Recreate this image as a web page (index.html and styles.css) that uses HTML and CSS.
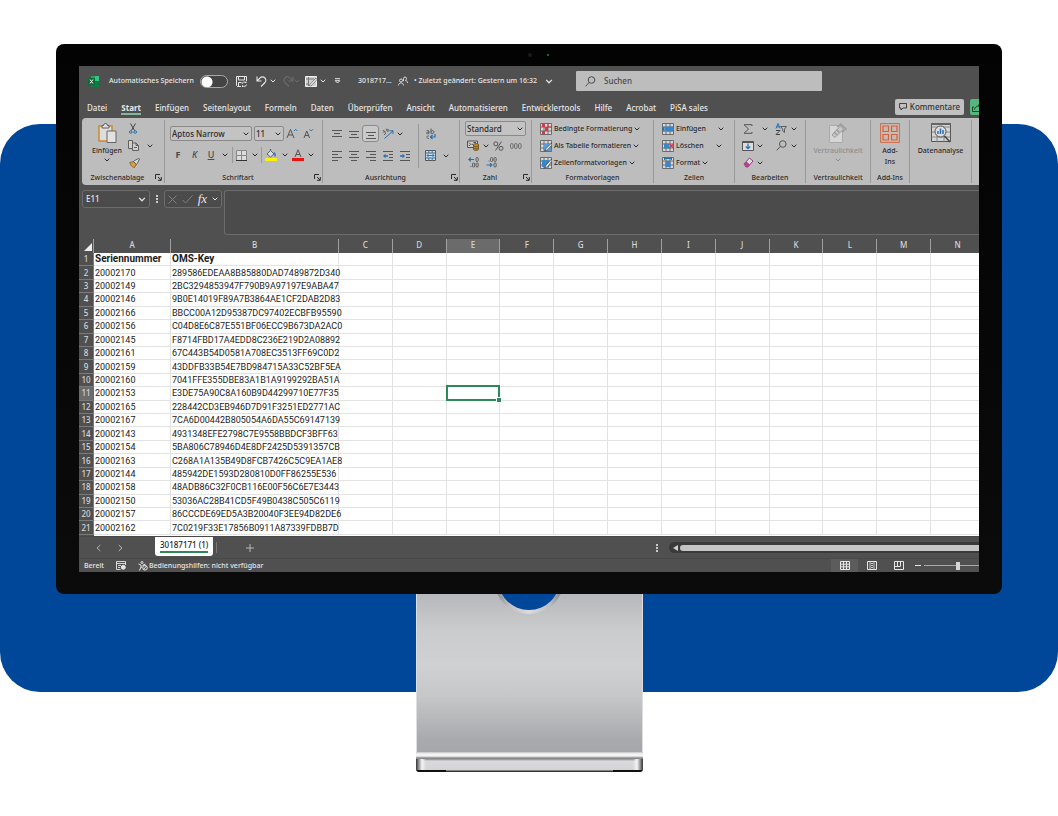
FILE: index.html
```html
<!DOCTYPE html>
<html lang="de">
<head>
<meta charset="utf-8">
<title>30187171 (1)</title>
<link rel="stylesheet" href="styles.css">
</head>
<body>
<svg class="sprite" aria-hidden="true">
  <symbol id="chev" viewBox="0 0 6 4"><path d="M.7.7 3 3 5.300.7" fill="none" stroke="currentColor" stroke-width="1"/></symbol>
  <symbol id="launch" viewBox="0 0 7 7"><path d="M.5 5V.5H5M3 3l3 3M6.300 3v3.300H3" fill="none" stroke="currentColor" stroke-width="1"/></symbol>
  <symbol id="sheetgrid" viewBox="0 0 12 12"><path d="M.5.5h11v11H.5zM.5 4h11M.5 8h11M4 .5v11M8 .5v11" fill="#d8d8d8" stroke="#555" stroke-width=".8"/></symbol>
</svg>
<main class="stage">
  <div class="monitor">
    <div class="camera"><i class="lens"></i><i class="led"></i></div>
    <div class="screen">
      <header class="titlebar">
        <svg width="11" height="11" viewBox="0 0 11 11"><path d="M3 0h8v11H3z" fill="#21a366"/><path d="M3 5h8v6H3z" fill="#107c41"/><path d="M7 0h4v5H7z" fill="#33c481"/><path d="M0 2h7v7H0z" fill="#0b6a38"/><path d="M2 3.500l3 4M5 3.500l-3 4" stroke="#fff"/></svg>
        <label for="autosave">Automatisches Speichern</label>
        <input id="autosave" class="toggle" type="checkbox">
        <button aria-label="Speichern"><svg width="11" height="11" viewBox="0 0 11 11" fill="none" stroke="currentColor"><path d="M5 10.500H1.500l-1-1V.5h10V5M2.500.5V4h6V.5M2.500 10V6.500h3M6 8a2.200 2.200 0 0 1 4-1V5.500M10.500 8.500a2.200 2.200 0 0 1-4 1V11"/></svg></button>
        <button aria-label="Rückgängig"><svg width="11" height="11" viewBox="0 0 11 11" fill="none" stroke="currentColor" stroke-width="1.100"><path d="M1 .5V5h4.500M1.200 4.800 4 2a3.200 3.200 0 0 1 5 4.500L5 10.500"/></svg></button>
        <svg class="chev"><use href="#chev"/></svg>
        <button class="off" aria-label="Wiederholen"><svg width="11" height="11" viewBox="0 0 11 11" fill="none" stroke="currentColor" stroke-width="1.100"><path d="M10 .5V5H5.500M9.800 4.800 7 2a3.200 3.200 0 0 0-5 4.500L6 10.500"/></svg></button>
        <svg class="chev off"><use href="#chev"/></svg>
        <button aria-label="Zeichnen"><svg width="12" height="11" viewBox="0 0 12 11"><path d="M.5.5h11v10H.5z" fill="#d0d0d0" stroke="#eee"/><path d="M1 3h8M3.500 1v9M1 8h3" stroke="#777"/><path d="M4 9.500 11 2l1 1.500-6 6.500z" fill="#f4f4f4" stroke="#555" stroke-width=".7"/></svg></button>
        <svg class="chev"><use href="#chev"/></svg>
        <button aria-label="Symbolleiste anpassen"><svg width="7" height="6" viewBox="0 0 7 6" fill="none" stroke="currentColor"><path d="M1 .7h5M1.200 2.700h4.600L3.500 5z"/></svg></button>
        <span>3018717...</span>
        <svg width="10" height="10" viewBox="0 0 10 10" fill="none" stroke="currentColor" stroke-width=".9"><circle cx="3" cy="4.500" r="1.500"/><path d="M.5 9.500c0-3.500 5-3.500 5 0M5.500 5.200V2.500a1.500 1.500 0 0 1 3 0c0 1-.5 1.500-1 2 1.500.3 2 1 2 2.500"/></svg>
        <span class="edited">• Zuletzt geändert: Gestern um 16:32</span>
        <svg class="chev big"><use href="#chev"/></svg>
        <label class="search"><svg width="11" height="11" viewBox="0 0 11 11" fill="none" stroke="currentColor"><circle cx="6.500" cy="4" r="3.300"/><path d="M4 6.500.7 10.300"/></svg><input type="text" placeholder="Suchen" aria-label="Suchen"></label>
      </header>
      <nav class="tabs">
        <a href="#">Datei</a><a href="#" class="active">Start</a><a href="#">Einfügen</a><a href="#">Seitenlayout</a><a href="#">Formeln</a><a href="#">Daten</a><a href="#">Überprüfen</a><a href="#">Ansicht</a><a href="#">Automatisieren</a><a href="#">Entwicklertools</a><a href="#">Hilfe</a><a href="#">Acrobat</a><a href="#">PiSA sales</a>
        <button class="comments"><svg width="8" height="8" viewBox="0 0 8 8" fill="none" stroke="currentColor" stroke-width=".9"><path d="M.5.5h7v4.500H4L2 7V5H.5z"/></svg>Kommentare</button>
        <button class="share" aria-label="Freigeben"><svg width="10" height="9" viewBox="0 0 10 9" fill="none" stroke="currentColor" stroke-width=".9"><path d="M2 4H.5v4.500h9V5M2.500 6.500C3 4 4.500 3 7 3V1l3 3"/></svg></button>
      </nav>

      <section class="ribbon">
        <div class="group g-clip">
          <div class="body">
            <button class="large"><svg width="19" height="20" viewBox="0 0 19 20"><path d="M1 3h13v15H1z" fill="#ddd" stroke="#c98a2b" stroke-width="1.500"/><path d="M4 2.500h1.500a2 2 0 0 1 4 0H11V5H4z" fill="#ddd" stroke="#555" stroke-width=".9"/><path d="M9 8h9v11.500H9z" fill="#e2e2e2" stroke="#666"/></svg><span>Einfügen</span><svg class="chev"><use href="#chev"/></svg></button>
            <div class="rows">
              <div class="row"><button aria-label="Ausschneiden"><svg width="8" height="11" viewBox="0 0 8 11" fill="none"><path d="M1.500.5l4 7M6.500.5l-4 7" stroke="#444"/><circle cx="1.800" cy="9" r="1.300" stroke="#2470b5"/><circle cx="6.200" cy="9" r="1.300" stroke="#2470b5"/></svg></button></div>
              <div class="row"><button aria-label="Kopieren"><svg width="11" height="11" viewBox="0 0 11 11" fill="#cfcfcf" stroke="#555" stroke-width=".9"><path d="M4 8.500H.5v-8H4.500V3"/><path d="M4.500 3H8l2.500 2.500v5h-6zM8 3v2.500h2.500M6 7.500h3"/></svg></button><svg class="chev"><use href="#chev"/></svg></div>
              <div class="row"><button aria-label="Format übertragen"><svg width="11" height="10" viewBox="0 0 11 10"><path d="M.8 4.500 5 3.500l2.500 2.500L5.500 9.500C3 9 1.500 7.500.8 4.500z" fill="#d9a03f" stroke="#6b5020" stroke-width=".7"/><path d="M4.500 3.500l3 3 .8-1.200L10.500 1 9.700.4 5.700 2.600z" fill="#ddd" stroke="#444" stroke-width=".8"/></svg></button></div>
            </div>
          </div>
          <footer class="more">Zwischenablage<svg class="launch"><use href="#launch"/></svg></footer>
        </div>

        <div class="group g-font">
          <div class="body stack">
            <div class="fontrow">
              <span class="combo wide"><select aria-label="Schriftart"><option>Aptos Narrow</option></select><svg class="chev"><use href="#chev"/></svg></span>
              <span class="combo"><select aria-label="Schriftgrad"><option>11</option></select><svg class="chev"><use href="#chev"/></svg></span>
              <button aria-label="Schriftgrad vergrößern"><svg width="12" height="11" viewBox="0 0 12 11" fill="none"><path d="M1 10 4.500 1.500 8 10M2.300 7h4.400" stroke="#555"/><path d="M8 3l1.700-1.700L11.400 3" stroke="#2470b5"/></svg></button>
              <button aria-label="Schriftgrad verkleinern"><svg width="12" height="11" viewBox="0 0 12 11" fill="none"><path d="M2 10 4.800 3 7.600 10M3 7.500h3.600" stroke="#555"/><path d="M7.500 1.300 9.200 3l1.700-1.700" stroke="#2470b5"/></svg></button>
            </div>
            <div class="stylerow">
              <button class="fmt"><b>F</b></button><button class="fmt"><i>K</i></button><button class="fmt"><u>U</u></button><svg class="chev"><use href="#chev"/></svg><hr>
              <button aria-label="Rahmen"><svg width="11" height="11" viewBox="0 0 11 11"><path d="M.5.5h10v10H.5z" fill="#dcdcdc" stroke="#888"/><path d="M5.500 1v9M1 5.500h9" stroke="#888"/><path d="M0 10.500h11" stroke="#333"/></svg></button><svg class="chev"><use href="#chev"/></svg><hr>
              <button aria-label="Füllfarbe"><svg width="12" height="12" viewBox="0 0 12 12"><path d="M2 5 5.500 1.500 9 5 5.500 8z" fill="#ddd" stroke="#555" stroke-width=".9"/><path d="M5.500 1.500V0M9 3.500c1 .5 1.300 1.500 1 4" fill="none" stroke="#2470b5" stroke-width="1.300"/><path d="M0 9h12v3H0z" fill="#f7f200"/></svg></button><svg class="chev"><use href="#chev"/></svg>
              <button aria-label="Schriftfarbe"><svg width="12" height="12" viewBox="0 0 12 12"><path d="M3 8 6 .8 9 8M4 5.500h4" fill="none" stroke="#555"/><path d="M0 9h12v3H0z" fill="#ee1111"/></svg></button><svg class="chev"><use href="#chev"/></svg>
            </div>
          </div>
          <footer class="more">Schriftart<svg class="launch"><use href="#launch"/></svg></footer>
        </div>

        <div class="group g-align">
          <div class="body">
            <div class="aligns">
              <button aria-label="Oben"><svg width="10" height="10" viewBox="0 0 10 10" stroke="#555"><path d="M0 1.500h10M2 4.500h6M0 7.500h10"/></svg></button>
              <button aria-label="Mitte"><svg width="10" height="10" viewBox="0 0 10 10" stroke="#555"><path d="M0 2.500h10M2 5.500h6M0 8.500h10"/></svg></button>
              <button aria-label="Unten" class="pressed"><svg width="10" height="10" viewBox="0 0 10 10" stroke="#555"><path d="M0 3.500h10M2 6.500h6M0 9.500h10"/></svg></button>
              <button aria-label="Ausrichtung"><svg width="12" height="11" viewBox="0 0 12 11" fill="none"><path d="M1 2l2.500 3M4 .8l2 3M1 4.500c1-1.500 2-1.500 2.500-.5M4.500 2c1.500-1.500 3 0 1.500 1.500M2 7l2-2" stroke="#555" stroke-width=".9"/><path d="M2.500 10.500 11 3M7.500 2.800H11v3.200" stroke="#2470b5"/></svg></button>
              <svg class="chev"><use href="#chev"/></svg>
              <button aria-label="Linksbündig"><svg width="10" height="10" viewBox="0 0 10 10" stroke="#555"><path d="M0 .5h10M0 3.500h6M0 6.500h10M0 9.500h6"/></svg></button>
              <button aria-label="Zentriert"><svg width="10" height="10" viewBox="0 0 10 10" stroke="#555"><path d="M0 .5h10M2 3.500h6M0 6.500h10M2 9.500h6"/></svg></button>
              <button aria-label="Rechtsbündig"><svg width="10" height="10" viewBox="0 0 10 10" stroke="#555"><path d="M0 .5h10M4 3.500h6M0 6.500h10M4 9.500h6"/></svg></button>
              <button aria-label="Einzug verkleinern"><svg width="10" height="10" viewBox="0 0 10 10"><path d="M0 .5h10M6 3.500h4M6 6.500h4M0 9.500h10" stroke="#555"/><path d="M0 5l2.500-2.300v1.600H5v1.400H2.500v1.600z" fill="#2470b5"/></svg></button>
              <button aria-label="Einzug vergrößern"><svg width="10" height="10" viewBox="0 0 10 10"><path d="M0 .5h10M6 3.500h4M6 6.500h4M0 9.500h10" stroke="#555"/><path d="M5 5 2.500 2.700v1.600H0v1.400h2.500v1.600z" fill="#2470b5"/></svg></button>
            </div>
            <hr>
            <div class="wraps">
              <button aria-label="Textumbruch"><svg width="11" height="12" viewBox="0 0 11 12" fill="none"><path d="M4 5.500V3c-1-1-2.500-.5-2.500-.2M4 4c-3-.3-3 2-1.500 1.700L4 5M6 .5v5M6 3.500c1-1.500 3-1 3 .5s-2 2-3 1M4 8c-2-1-3.500 2.500 0 2.500" stroke="#555" stroke-width=".9"/><path d="M10 6v3H5.500M7.500 7l-2 2 2 2" stroke="#2470b5" stroke-width="1.200"/></svg></button><span></span>
              <button aria-label="Verbinden"><svg width="11" height="11" viewBox="0 0 11 11"><path d="M.5.5h10v10H.5z" fill="#dcdcdc" stroke="#555"/><path d="M3.800 0v11M7.200 0v11" stroke="#666"/><path d="M.5 3h10v5H.5z" fill="#c9dcea" stroke="#2470b5"/><path d="M2 5.500h7M3.500 4 2 5.500 3.500 7M7.500 4 9 5.500 7.500 7" fill="none" stroke="#2470b5" stroke-width=".9"/></svg></button><svg class="chev"><use href="#chev"/></svg>
            </div>
          </div>
          <footer class="more">Ausrichtung<svg class="launch"><use href="#launch"/></svg></footer>
        </div>

        <div class="group g-num">
          <div class="body rows">
            <div class="row"><span class="combo wide"><select aria-label="Zahlenformat"><option>Standard</option></select><svg class="chev"><use href="#chev"/></svg></span></div>
            <div class="row nums"><button aria-label="Währung"><svg width="12" height="11" viewBox="0 0 12 11"><path d="M.5 1h10v6.500H.5z" fill="#ccc" stroke="#555"/><path d="M2 2.500l1.500 1.800L2 6M9 2.500H6.500M4.500 4.300h2" fill="none" stroke="#555"/><path d="M6.500 4.500c0-1.200 5-1.200 5 0v5c0 1.200-5 1.200-5 0z" fill="#b88a3a" stroke="#6b4a14" stroke-width=".8"/><path d="M6.500 6c1 .8 4 .8 5 0M6.500 8c1 .8 4 .8 5 0" fill="none" stroke="#6b4a14" stroke-width=".7"/></svg></button><svg class="chev"><use href="#chev"/></svg><button aria-label="Prozent"><svg width="11" height="10" viewBox="0 0 11 10" fill="none" stroke="#555"><circle cx="2.800" cy="2.800" r="2"/><circle cx="8" cy="7.300" r="2"/><path d="M8.500.5 2.500 9.500"/></svg></button><button aria-label="Tausendertrennzeichen"><svg width="12" height="6" viewBox="0 0 12 6" fill="none" stroke="#666" stroke-width=".9"><rect x=".5" y=".5" width="2.600" height="5" rx="1.300"/><rect x="4.500" y=".5" width="2.600" height="5" rx="1.300"/><rect x="8.500" y=".5" width="2.600" height="5" rx="1.300"/></svg></button></div>
            <div class="row decs"><button aria-label="Dezimalstelle hinzufügen"><svg width="11" height="11" viewBox="0 0 11 11" fill="none" stroke="#555" stroke-width=".9"><path d="M6 2.500H.8M2.800.7.8 2.500l2 1.800" stroke="#2470b5" stroke-width="1.100"/><rect x="8" y=".5" width="2.200" height="4" rx="1"/><rect x="4.500" y="6" width="2.200" height="4" rx="1"/><rect x="8" y="6" width="2.200" height="4" rx="1"/><path d="M2.500 9.500h1"/></svg></button><button aria-label="Dezimalstelle entfernen"><svg width="11" height="11" viewBox="0 0 11 11" fill="none" stroke="#555" stroke-width=".9"><rect x="4.500" y=".5" width="2.200" height="4" rx="1"/><rect x="8" y=".5" width="2.200" height="4" rx="1"/><path d="M2.500 4h1"/><rect x="8" y="6" width="2.200" height="4" rx="1"/><path d="M.5 8h5.500M4 6.200 6 8 4 9.800" stroke="#2470b5" stroke-width="1.100"/></svg></button></div>
          </div>
          <footer class="more">Zahl<svg class="launch"><use href="#launch"/></svg></footer>
        </div>

        <div class="group g-styles">
          <div class="body rows">
            <button class="row"><svg width="12" height="12" viewBox="0 0 12 12"><use href="#sheetgrid"/><path d="M2 1h3v3H2zM5 4h3v4H5zM2 8h3v3H2z" fill="#d3394a"/><path d="M8 1v3h3" fill="none" stroke="#d3394a"/></svg>Bedingte Formatierung<svg class="chev"><use href="#chev"/></svg></button>
            <button class="row"><svg width="12" height="12" viewBox="0 0 12 12"><use href="#sheetgrid"/><path d="M4 4h7v7H4z" fill="#5b9fd6"/><path d="M11.500 3 6 8.500 4.500 11l3-1L12 5z" fill="#eee" stroke="#444" stroke-width=".8"/></svg>Als Tabelle formatieren<svg class="chev"><use href="#chev"/></svg></button>
            <button class="row"><svg width="12" height="12" viewBox="0 0 12 12"><use href="#sheetgrid"/><path d="M2 3h7v7H2z" fill="#3a86c8"/><path d="M11.500 2 6 8 4.500 11l3-1L12 4z" fill="#eee" stroke="#444" stroke-width=".8"/></svg>Zellenformatvorlagen<svg class="chev"><use href="#chev"/></svg></button>
          </div>
          <footer>Formatvorlagen</footer>
        </div>

        <div class="group g-cells">
          <div class="body rows">
            <button class="row"><svg width="12" height="12" viewBox="0 0 12 12"><use href="#sheetgrid"/><path d="M4 3.500h7.500v5H4z" fill="#3a86c8"/><path d="M5 6H.5M2.500 4l-2 2 2 2" fill="none" stroke="#2470b5" stroke-width="1.200"/></svg><span>Einfügen</span><svg class="chev"><use href="#chev"/></svg></button>
            <button class="row"><svg width="12" height="12" viewBox="0 0 12 12"><use href="#sheetgrid"/><path d="M2 3.500h5v5H2z" fill="#3a86c8"/><path d="M7.500 4l4 4M11.500 4l-4 4" stroke="#d3394a" stroke-width="1.200"/></svg><span>Löschen</span><svg class="chev"><use href="#chev"/></svg></button>
            <button class="row"><svg width="12" height="12" viewBox="0 0 12 12"><use href="#sheetgrid"/><path d="M3.500 4h5v6h-5z" fill="#3a86c8"/><path d="M2.500 1.500h7M2.500 0v3M9.500 0v3" stroke="#2470b5"/></svg>Format<svg class="chev"><use href="#chev"/></svg></button>
          </div>
          <footer>Zellen</footer>
        </div>

        <div class="group g-edit">
          <div class="body edits">
            <button aria-label="Summe"><svg width="10" height="10" viewBox="0 0 10 10" fill="none" stroke="#555"><path d="M9 2V.7H1L5.500 5 1 9.300h8V8"/></svg></button><svg class="chev end"><use href="#chev"/></svg>
            <button aria-label="Sortieren"><svg width="12" height="12" viewBox="0 0 12 12" fill="none"><path d="M1 5.500 3 .5l2 5M1.700 3.800h2.600" stroke="#2470b5"/><path d="M1 7.500h4L1 11.500h4" stroke="#444"/><path d="M5.500 3.500h6L9.500 6v3.500L7.700 8V6z" stroke="#555" stroke-width=".9"/></svg></button><svg class="chev"><use href="#chev"/></svg>
            <button aria-label="Ausfüllen"><svg width="12" height="10" viewBox="0 0 12 10"><path d="M.5.5h11v9H.5z" fill="#ddd" stroke="#555"/><path d="M0 1.500h12" stroke="#555"/><path d="M6 2.500v5M3.800 5.500 6 7.700l2.200-2.200" fill="none" stroke="#2470b5" stroke-width="1.200"/></svg></button><svg class="chev"><use href="#chev"/></svg>
            <button aria-label="Suchen"><svg width="11" height="11" viewBox="0 0 11 11" fill="none" stroke="#555"><circle cx="6.800" cy="4" r="3.300"/><path d="M4.300 6.500.7 10.300"/></svg></button><svg class="chev"><use href="#chev"/></svg>
            <button aria-label="Löschen"><svg width="11" height="11" viewBox="0 0 11 11"><path d="M1 7 6.500 1l3.500 3L5 10H3z" fill="#ddd" stroke="#a13580"/><path d="M1 7l2.500-2.500L7 7.700 5 10H3z" fill="#b3418f"/></svg></button><svg class="chev"><use href="#chev"/></svg>
          </div>
          <footer>Bearbeiten</footer>
        </div>

        <div class="group g-sens">
          <div class="body"><button class="large muted"><svg width="18" height="20" viewBox="0 0 18 20"><path d="M.5 2.500h13v17H.5z" fill="#d6d6d6" stroke="#aaa"/><path d="M3 12 11.500 3l3 3L6 14.500z" fill="#c8c8c8" stroke="#999"/><path d="M8 4l4-3 5 5-4 3M5 9l3 3M7.500 6.500l3 3" fill="none" stroke="#999" stroke-width="1.300"/></svg><span>Vertraulichkeit</span><svg class="chev"><use href="#chev"/></svg></button></div>
          <footer>Vertraulichkeit</footer>
        </div>
        <div class="group g-add">
          <div class="body"><button class="large"><svg width="20" height="20" viewBox="0 0 20 20" fill="#cbb9b0" stroke="#d0613a" stroke-width="1.200"><path d="M.6.6h18.800v18.800H.6z" fill="#c8beb9" stroke-width=".9"/><path d="M3 3h5.500v5.500H3zM11.500 3H17v5.500h-5.500zM3 11.500h5.500V17H3zM11.500 11.500H17V17h-5.500z"/></svg><span>Add-<br>Ins</span></button></div>
          <footer>Add-Ins</footer>
        </div>
        <div class="group g-data">
          <div class="body"><button class="large"><svg width="20" height="20" viewBox="0 0 20 20"><path d="M.5.5h19v18H.5z" fill="#d4d4d4" stroke="#555"/><path d="M.5 4h19M.5 9h19M.5 14h19M6 4v15M13 4v15" stroke="#777" stroke-width=".8"/><path d="M0 0h20v2H0z" fill="#666"/><circle cx="9.500" cy="8.500" r="5.500" fill="#ddd" stroke="#555"/><path d="M7 11V8M9.500 11V5.500M12 11V7" stroke="#2470b5" stroke-width="1.500"/><path d="M13.500 13 19 19" stroke="#444" stroke-width="1.500"/></svg><span>Datenanalyse</span></button></div>
          <footer></footer>
        </div>
      </section>

      <section class="formulabar">
        <span class="namebox"><input type="text" value="E11" aria-label="Namenfeld"><svg class="chev big"><use href="#chev"/></svg></span>
        <i class="dots"></i>
        <span class="fx">
          <svg width="9" height="9" viewBox="0 0 9 9" stroke="#808080"><path d="M.5.5l8 8M8.500.5l-8 8"/></svg>
          <svg width="11" height="9" viewBox="0 0 11 9" stroke="#808080" fill="none"><path d="M.5 5l3 3 7-7.500"/></svg>
          <em>fx</em><svg class="chev"><use href="#chev"/></svg>
        </span>
        <textarea aria-label="Bearbeitungsleiste"></textarea>
      </section>

      <section class="sheet">
        <table>
          <colgroup id="cols"></colgroup>
          <thead><tr id="letters"></tr></thead>
          <tbody id="rows"></tbody>
        </table>
      </section>

      <div class="sheettabs">
        <button aria-label="Zurück"><svg width="5" height="8" viewBox="0 0 5 8" fill="none" stroke="currentColor"><path d="M4.300 1 1 4l3.300 3"/></svg></button>
        <button aria-label="Weiter"><svg width="5" height="8" viewBox="0 0 5 8" fill="none" stroke="currentColor"><path d="M.7 1 4 4 .7 7"/></svg></button>
        <a href="#" class="sheettab"><span>30187171 (1)</span></a>
        <hr>
        <button class="plus" aria-label="Neues Blatt"><svg width="8" height="8" viewBox="0 0 8 8" stroke="currentColor"><path d="M4 0v8M0 4h8"/></svg></button>
        <i class="dots"></i>
        <div class="track"><svg width="5" height="6" viewBox="0 0 5 6"><path d="M5 0v6L0 3z" fill="#d0d0d0"/></svg><i class="thumb"></i></div>
      </div>
      <footer class="status">
        <span>Bereit</span>
        <svg width="10" height="9" viewBox="0 0 10 9" fill="none" stroke="currentColor" stroke-width=".9"><path d="M4.500 8.500h-4v-8h9V4M0 2.500h10M2 4.500h3M2 6.500h2"/><circle cx="7.300" cy="6.300" r="2" fill="currentColor"/></svg>
        <svg width="10" height="10" viewBox="0 0 10 10" fill="none" stroke="currentColor"><circle cx="4" cy="1.500" r="1"/><path d="M.5 3 3 4v2L1.500 9.500M7.500 3 5 4v1M3 6l1 .5"/><circle cx="7" cy="6.800" r="2.300"/><path d="M5.500 8.500 8.500 5"/></svg>
        <span class="access">Bedienungshilfen: nicht verfügbar</span>
        <div class="views">
          <button class="on" aria-label="Normal"><svg width="10" height="9" viewBox="0 0 10 9" fill="none" stroke="currentColor"><path d="M.5.5h9v8h-9zM.5 3.200h9M.5 5.800h9M3.500 0v9M6.500 0v9"/></svg></button>
          <button aria-label="Seitenlayout"><svg width="10" height="9" viewBox="0 0 10 9" fill="none" stroke="currentColor"><path d="M.5.5h9v8h-9z"/><path d="M3 1v7M7 1v7M4 2.500h2M4 4.500h2M4 6.500h2" stroke-width=".8"/></svg></button>
          <button aria-label="Umbruchvorschau"><svg width="10" height="9" viewBox="0 0 10 9" fill="none" stroke="currentColor"><path d="M.5.5h9v8h-9zM3.500 0v5M6.500 0v5M.5 5.500h6"/></svg></button>
        </div>
        <svg width="6" height="3" viewBox="0 0 6 3"><path d="M0 1h6v1H0z" fill="currentColor"/></svg>
        <input class="zoom" type="range" aria-label="Zoom" min="0" max="100" value="47">
      </footer>
    </div>
  </div>
  <div class="stand">
    <svg width="66" height="21" viewBox="0 0 66 21"><defs><linearGradient id="ring" x2="1"><stop offset="0" stop-color="#77797c"/><stop offset=".2" stop-color="#bcbdc0"/><stop offset=".5" stop-color="#dcdcde"/><stop offset=".8" stop-color="#bcbdc0"/><stop offset="1" stop-color="#77797c"/></linearGradient></defs><circle cx="33" cy="-15" r="35" fill="url(#ring)"/><circle cx="33" cy="-15" r="31" fill="#004799"/></svg>
  </div>
  <div class="foot"></div>
</main>
<script src="script.js"></script>
</body>
</html>
```
FILE: styles.css
```css
* { box-sizing: border-box; }
body { margin: 0; background: #fff; font-family: "Noto Sans", "Open Sans", sans-serif; font-size: 7px; font-weight: 500; line-height: 10px; }
button, input, select, textarea { font: inherit; color: inherit; background: none; border: 0; padding: 0; margin: 0; }
button { display: flex; align-items: center; justify-content: center; white-space: nowrap; }
a { color: inherit; text-decoration: none; }
svg { display: block; flex: none; }
hr { width: 1px; margin: 0; border: 0; background: #999; align-self: stretch; }
.sprite { position: absolute; width: 0; height: 0; }
.chev { width: 6px; height: 4px; }
.chev.big { width: 8px; height: 5px; }

.stage { position: relative; min-height: 100vh; padding: 44px 56px; display: flex; flex-direction: column; align-items: center; isolation: isolate; }
.stage::before { content: ""; position: absolute; z-index: -1; inset: 124px 0; border-radius: 40px; background: #004799; }
.monitor { align-self: stretch; padding: 0 23px 22px; border-radius: 8px; background: linear-gradient(#030303, #0b0b0b); }
.camera { height: 22px; display: flex; align-items: center; justify-content: center; gap: 15px; padding-left: 18px; }
.lens { width: 4px; height: 4px; border-radius: 50%; background: #1b1b1b; }
.led { width: 2px; height: 2px; border-radius: 50%; background: #2a8a2a; }
.screen { overflow: hidden; background: #505050; color: #e6e6e6; display: flex; flex-direction: column; }

.titlebar { height: 30px; padding-left: 9px; display: grid; grid-template-columns: 21px 91px 36px 20px 14px 13px 11px 11px 15px 14px 24px 40px 16px 131px 31px minmax(0, 246px); align-items: center; justify-items: start; white-space: nowrap; }
.titlebar .off { color: #6c6c6c; }
.toggle { appearance: none; width: 28px; height: 13px; border: 1px solid #a8a8a8; border-radius: 7px; background: radial-gradient(circle at 6px 6px, #fff 5px, #444 6px); }
.search { width: 100%; height: 20px; padding: 0 9px; display: flex; align-items: center; gap: 8px; background: #bdbdbd; color: #4a4a4a; border-radius: 1px; font-size: 8px; }
.search input { flex: 1; min-width: 0; outline: 0; }
.search input::placeholder { color: #4a4a4a; opacity: 1; }

.tabs { height: 22px; padding-left: 8px; display: flex; align-items: center; gap: 14px; font-size: 8px; white-space: nowrap; }
.tabs a { height: 16px; padding-top: 3px; line-height: 11px; border-bottom: 2px solid transparent; }
.tabs .active { font-weight: 700; border-color: #7fb89a; }
.comments { height: 16px; margin-left: auto; padding: 0 4px; gap: 3px; border-radius: 2px; background: #c0c0c0; color: #333; }
.share { width: 9px; height: 16px; margin-left: -8px; justify-content: flex-start; padding-left: 2px; overflow: hidden; border-radius: 2px 0 0 2px; background: #55b77d; color: #143a24; }

.ribbon { height: 67px; margin-left: 3px; padding: 2px 0; display: flex; border-radius: 4px 0 0 4px; background: #bdbdbd; color: #2b2b2b; }
.group { flex: none; display: flex; flex-direction: column; border-right: 1px solid #999; }
.body { flex: 1; display: flex; min-height: 0; }
.group > footer { position: relative; height: 11px; display: flex; align-items: center; justify-content: center; }
.group > .more { padding-right: 11px; }
.launch { position: absolute; right: 1px; top: 2px; width: 7px; height: 7px; }
.g-clip { width: 83px; }
.g-font { width: 158px; }
.g-align { width: 137px; }
.g-num { width: 72px; }
.g-styles { width: 122px; }
.g-cells { width: 81px; }
.g-edit { width: 71px; }
.g-sens { width: 65px; }
.g-add { width: 39px; }
.g-data { width: 62px; }
.large { flex: 1; flex-direction: column; justify-content: flex-start; padding-top: 3px; gap: 2px; line-height: 11px; }
.muted { color: #8d8d8d; }
.rows { display: flex; flex-direction: column; }
.row { height: 17px; display: flex; align-items: center; justify-content: flex-start; gap: 2px; }
.g-clip .large { flex: none; width: 42px; padding-left: 4px; margin-left: 2px; }
.g-clip .row { width: 30px; padding-left: 2px; gap: 8px; }
.g-clip .row:nth-child(odd) { padding-left: 3px; }
.g-clip .launch { right: 2px; }
.stack { flex-direction: column; padding: 5px 5px 0; gap: 6px; }
.fontrow { display: grid; grid-template-columns: 82px 30px 12px 12px; column-gap: 2px; height: 16px; align-items: center; }
.fontrow button:last-child { margin-left: 4px; }
.combo { position: relative; display: block; height: 15px; border: 1px solid #8a8a8a; border-radius: 2px; background: #c3c3c3; }
.combo select { appearance: none; width: 100%; height: 100%; padding-left: 1px; font-size: 8px; line-height: 13px; display: block; }
.combo .chev { position: absolute; right: 2px; top: 5px; }
.stylerow { display: grid; grid-template-columns: 16px 17px 16px 11px 4px 15px 11px 3px 15px 13px 14px 12px; height: 16px; align-items: center; justify-items: center; }
.fmt { font-size: 9px; color: #4a4a4a; }
.aligns { padding: 5px 0 0 5px; display: grid; grid-template-columns: repeat(5, 17px); grid-template-rows: 17px 17px; row-gap: 5px; align-items: center; justify-items: center; align-content: start; width: 95px; }
.pressed { width: 17px; height: 17px; border: 1px solid #8a8a8a; border-radius: 3px; background: #c9c9c9; }
.aligns > .chev { justify-self: start; margin-left: 1px; }
.g-align hr { margin: 4px 0; }
.wraps { padding: 5px 0 0 1px; display: grid; grid-template-columns: 20px 12px; grid-template-rows: 17px 17px; row-gap: 5px; align-items: center; justify-items: center; align-content: start; }
.g-num .rows { padding-left: 5px; }
.g-num .combo { width: 61px; }
.g-num .nums { padding-left: 2px; gap: 4px; }
.nums button + button { margin-left: 2px; }
.g-num .decs { padding-left: 3px; gap: 7px; }
.g-styles .rows { padding-left: 8px; }
.g-cells .rows { padding-left: 8px; }
.g-cells span { width: 40px; text-align: left; }
.g-cells .row + .row span { width: 38px; }
.edits { display: grid; grid-template-columns: 14px 18px 16px 8px; grid-template-rows: repeat(3, 17px); padding-left: 6px; align-items: center; justify-items: center; align-content: start; }
.edits .chev { justify-self: start; margin-left: 2px; }
.edits .end { margin-left: 7px; }

.formulabar { padding: 5px 0 4px 3px; display: flex; align-items: flex-start; }
.namebox, .fx { height: 18px; display: flex; align-items: center; border: 1px solid #6c6c6c; border-radius: 3px; background: #4b4b4b; }
.namebox { width: 68px; padding: 0 3px; font-size: 8px; }
.namebox input { flex: 1; min-width: 0; }
.dots { width: 2px; height: 8px; background: repeating-linear-gradient(#ccc 0 2px, transparent 2px 3px); }
.formulabar .dots { margin: 5px 6px; }
.fx { width: 58px; padding: 0 3px; justify-content: space-between; }
.fx em { font: italic 400 13px/14px "Liberation Serif", serif; }
.formulabar textarea { display: block; flex: 1; height: 45px; margin-left: 2px; resize: none; border: 1px solid #6c6c6c; border-right: 0; border-radius: 3px 0 0 3px; background: #4b4b4b; }

.sheet { height: 297px; overflow: hidden; background: linear-gradient(90deg, #505050 15px, #fff 15px); color: #1c1c1c; }
.sheet table { width: calc(100% + 6px); height: 296px; table-layout: fixed; border-collapse: separate; border-spacing: 0; }
.sheet th, .sheet td { padding: 0 0 0 2px; border-right: 1px solid #e3e3e3; border-bottom: 1px solid #e3e3e3; line-height: 12px; white-space: nowrap; text-align: left; }
.sheet td { padding-left: 1px; font-family: Roboto, sans-serif; font-size: 9px; font-weight: 400; }
.sheet tbody tr:first-child td { font-size: 10px; font-weight: 700; }
.sheet th { background: #505050; color: #d6d6d6; font-weight: 500; font-size: 8px; text-align: center; padding: 0; border-color: #7a7a7a; }
.sheet thead th { height: 14px; padding-bottom: 2px; border-bottom: 0; border-color: #a0a0a0; }
.sheet th.hot { background: #6b6b6b; }
.sheet tbody th.hot { border-right: 1px solid #2b8a57; }
.corner svg { margin: 3px 1px 0 auto; }
.col-n { width: 15px; }
.col-a { width: 77px; }
.col-b { width: 168px; }
.sheet td.selected { position: relative; }
.selected::before { content: ""; position: absolute; inset: -2px -1px -1px -1px; border: 2px solid #2b8a57; }
.selected::after { content: ""; position: absolute; right: -2px; bottom: -2px; width: 4px; height: 4px; background: #2b8a57; outline: 1px solid #fff; }

.sheettabs { height: 22px; display: flex; align-items: center; color: #b5b5b5; border-top: 1px solid #484848; }
.sheettabs > button:first-child { margin: 0 17px; }
.sheettab { align-self: flex-start; margin-left: 32px; padding: 2px 5px 3px; border-radius: 0 0 3px 3px; background: #fff; color: #1c1c1c; font-size: 8px; white-space: nowrap; }
.sheettab span { display: block; line-height: 12px; border-bottom: 2px solid #2b8a57; }
.sheettabs hr { margin: 5px 0 5px 3px; background: #777; }
.plus { margin-left: 29px; }
.sheettabs .dots { margin-left: auto; }
.track { width: 310px; height: 11px; margin-left: 11px; padding-left: 4px; display: flex; align-items: center; gap: 2px; border-radius: 6px 0 0 6px; background: #3a3a3a; }
.thumb { flex: 1; height: 6px; border-radius: 3px 0 0 3px; background: #c4c4c4; }
.status { height: 14px; padding-left: 5px; display: flex; align-items: center; border-top: 1px solid #484848; white-space: nowrap; overflow: hidden; }
.status > svg:nth-of-type(1) { margin: 0 12px; }
.access { margin-left: 1px; }
.views { margin-left: auto; display: flex; }
.views button { width: 27px; height: 13px; }
.views .on { background: #5c5c5c; }
.status > svg:last-of-type { margin: 0 3px; }
.zoom { appearance: none; width: 72px; height: 8px; margin-right: -17px; background: linear-gradient(#a8a8a8, #a8a8a8) center / 100% 1px no-repeat; }
.zoom::-webkit-slider-thumb { appearance: none; width: 4px; height: 8px; background: #d6d6d6; }

.stand { width: 227px; height: 158px; display: flex; justify-content: center; align-items: flex-start; border: solid #dedee0; border-width: 0 1px; background: linear-gradient(#b7b8bb, #cacbcd 22%, #d0d1d3 45%, #c6c7c9 65%, #a9aaad 92%, #a6a7aa); }
.foot { width: 227px; height: 20px; border-radius: 0 0 3px 3px; background: linear-gradient(90deg, #111 30px, transparent 30px calc(100% - 30px), #111 calc(100% - 30px)) bottom / 100% 2px no-repeat, linear-gradient(90deg, #333 0, #999 3px, #f5f5f5 6px, transparent 10px calc(100% - 10px), #f5f5f5 calc(100% - 6px), #999 calc(100% - 3px), #333) bottom / 100% 13px no-repeat, linear-gradient(#c4c4c6, #f4f4f5 2px 4px, #88898c 6px, #88898c 7px, #dadadc 9px, #d4d4d6 18px, #333 19px); }
```
FILE: script.js
```js
const records = [
  ["20002170", "289586EDEAA8B85880DAD7489872D340"],
  ["20002149", "2BC3294853947F790B9A97197E9ABA47"],
  ["20002146", "9B0E14019F89A7B3864AE1CF2DAB2D83"],
  ["20002166", "BBCC00A12D95387DC97402ECBFB95590"],
  ["20002156", "C04D8E6C87E551BF06ECC9B673DA2AC0"],
  ["20002145", "F8714FBD17A4EDD8C236E219D2A08892"],
  ["20002161", "67C443B54D0581A708EC3513FF69C0D2"],
  ["20002159", "43DDFB33B54E7BD984715A33C52BF5EA"],
  ["20002160", "7041FFE355DBE83A1B1A9199292BA51A"],
  ["20002153", "E3DE75A90C8A160B9D44299710E77F35"],
  ["20002165", "228442CD3EB946D7D91F3251ED2771AC"],
  ["20002167", "7CA6D00442B805054A6DA55C69147139"],
  ["20002143", "4931348EFE2798C7E9558BBDCF3BFF63"],
  ["20002154", "5BA806C78946D4E8DF2425D5391357CB"],
  ["20002163", "C268A1A135B49D8FCB7426C5C9EA1AE8"],
  ["20002144", "485942DE1593D280810D0FF86255E536"],
  ["20002158", "48ADB86C32F0CB116E00F56C6E7E3443"],
  ["20002150", "53036AC28B41CD5F49B0438C505C6119"],
  ["20002157", "86CCCDE69ED5A3B20040F3EE94D82DE6"],
  ["20002162", "7C0219F33E17856B0911A87339FDBB7D"]
];
const letters = "ABCDEFGHIJKLMN".split("");
const selection = { col: "E", row: 11 };

document.getElementById("cols").innerHTML =
  '<col class="col-n"><col class="col-a"><col class="col-b">' + "<col>".repeat(12);
document.getElementById("letters").innerHTML =
  '<th class="corner"><svg width="8" height="8" viewBox="0 0 8 8"><path d="M8 0v8H0z" fill="#eee"/></svg></th>' +
  letters.map(l => `<th${l === selection.col ? ' class="hot"' : ""}>${l}</th>`).join("");

const lines = [["Seriennummer", "OMS-Key"], ...records];
document.getElementById("rows").innerHTML = lines.map((line, i) => {
  const n = i + 1;
  const cells = letters.map((l, c) => {
    const cls = l === selection.col && n === selection.row ? ' class="selected"' : "";
    return `<td${cls}>${line[c] || ""}</td>`;
  }).join("");
  return `<tr><th${n === selection.row ? ' class="hot"' : ""}>${n}</th>${cells}</tr>`;
}).join("");
```
